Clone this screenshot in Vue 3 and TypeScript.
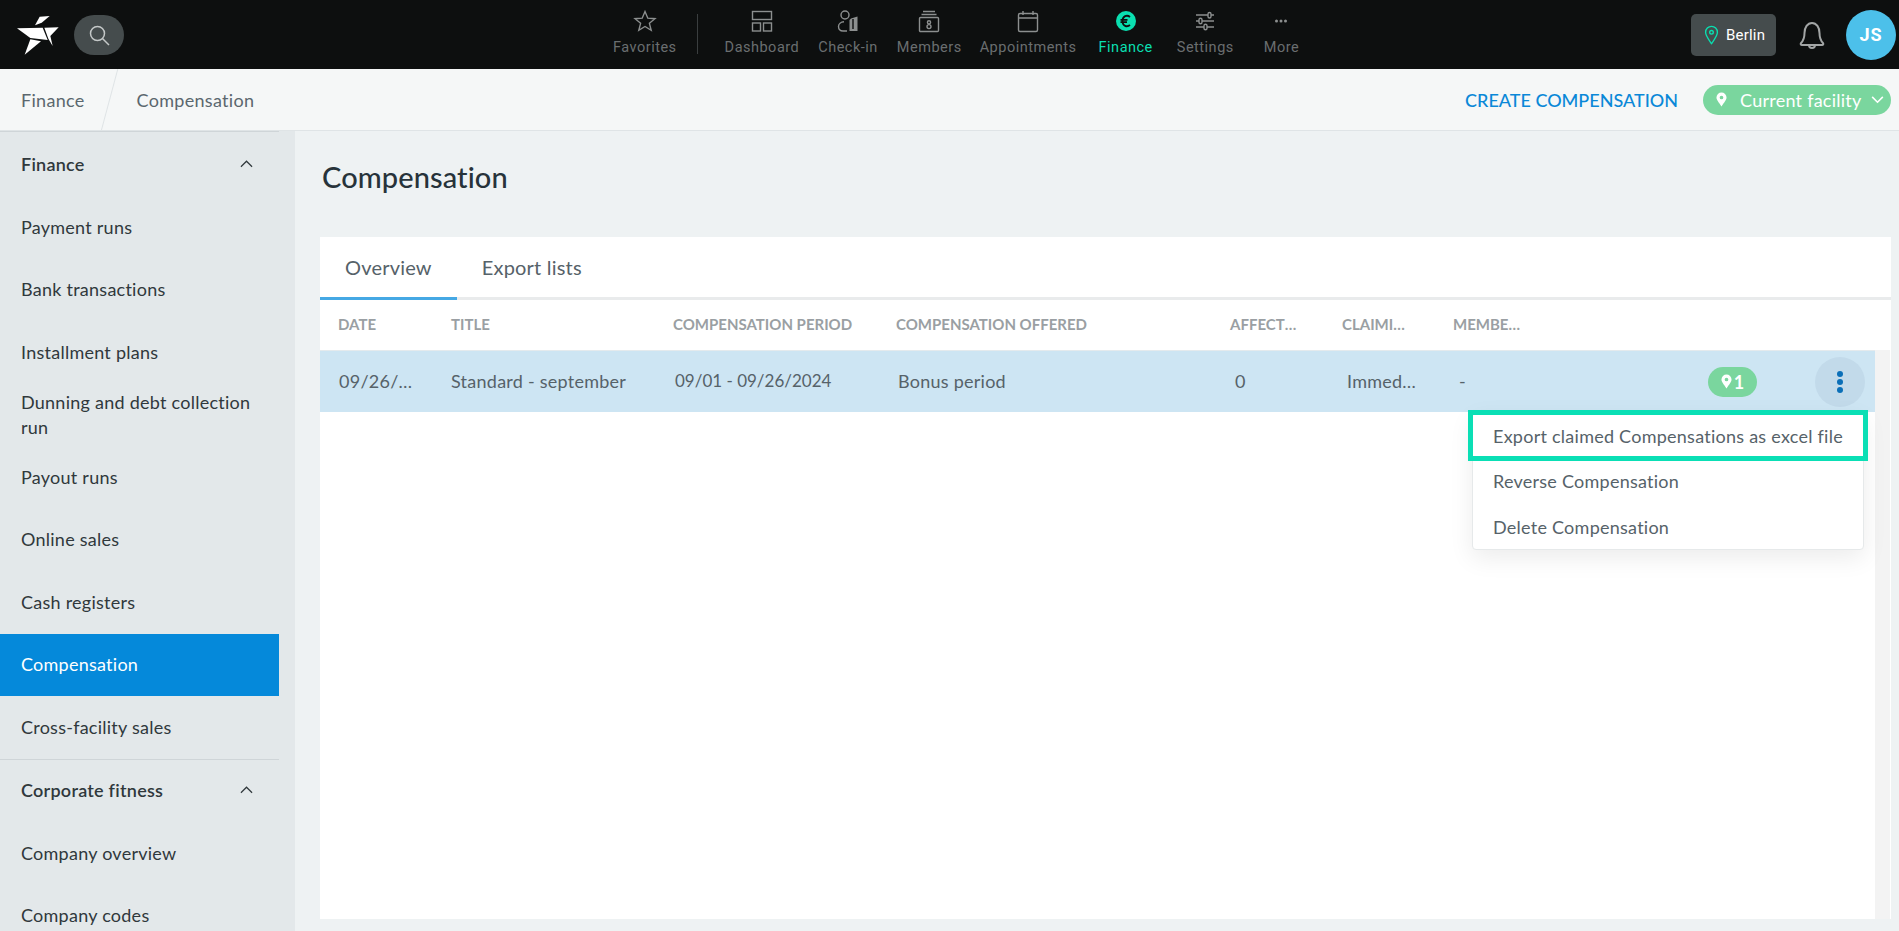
<template>
  <div class="app">
    <header class="topbar">
      <svg class="logo" viewBox="20 15 126 120" width="42" height="40">
        <polygon points="88,20 118,18 94,38 74,46" fill="#fff" />
        <polygon points="20,55 97,53 112,90 60,84" fill="#fff" />
        <polygon points="60,88 92,94 43,134" fill="#fff" />
        <polygon points="102,53 145,52 120,78 127,108 114,86" fill="#fff" />
      </svg>
      <button type="button" class="search-btn">
        <svg viewBox="0 0 24 24" width="24" height="24" fill="none" stroke="#c4c8c8" stroke-width="1.5">
          <circle cx="10.5" cy="10.5" r="7" />
          <path d="M15.5 15.5 L22 22" />
        </svg>
      </button>

      <nav class="main-nav">
        <a v-for="item in navItems" :key="item.label" class="nav-item" :class="{ active: item.label === 'Finance', fav: item.label === 'Favorites' }">
          <svg viewBox="0 0 24 24" width="24" height="24" fill="none" stroke="#8c8f8f" stroke-width="1.4">
            <template v-if="item.label === 'Favorites'">
              <path d="M12 2.5 L14.8 9.2 L22 9.7 L16.4 14.3 L18.2 21.3 L12 17.5 L5.8 21.3 L7.6 14.3 L2 9.7 L9.2 9.2 Z" />
            </template>
            <template v-else-if="item.label === 'Dashboard'">
              <rect x="2.5" y="2.5" width="19" height="8" />
              <rect x="2.5" y="14" width="8" height="8" />
              <rect x="13.5" y="14" width="8" height="8" />
            </template>
            <template v-else-if="item.label === 'Check-in'">
              <circle cx="9" cy="6" r="4" />
              <path d="M11 22 H7 C4 22 2.5 20 2.5 17.5 C2.5 15 5 13 8 12.8" />
              <path d="M15 9.5 L21.5 7.5 V22 H13.5 V11 Z" fill="#8c8f8f" stroke="none" />
              <path d="M17 10 V20" stroke="#0d0f0f" />
            </template>
            <template v-else-if="item.label === 'Members'">
              <rect x="2.5" y="8.5" width="19" height="14" rx="1" />
              <path d="M4.5 5.5 H19.5 M6 2.5 H18" />
              <circle cx="12" cy="13.3" r="1.6" />
              <circle cx="12" cy="17.6" r="2" />
            </template>
            <template v-else-if="item.label === 'Appointments'">
              <rect x="2.5" y="4.5" width="19" height="18" rx="1.5" />
              <path d="M2.5 9 H21.5 M7 2 V6 M17 2 V6" />
            </template>
            <template v-else-if="item.label === 'Finance'">
              <circle cx="12" cy="12" r="10" fill="#0adfb0" stroke="none" />
              <path d="M16 8 C13 5.5 8.5 7 8.5 12 C8.5 17 13 18.500 16 16 M6.500 10.800 H13.500 M6.500 13.200 H13" stroke="#0d0f0f" stroke-width="1.8" />
            </template>
            <template v-else-if="item.label === 'Settings'">
              <path d="M3 6 H21 M3 12 H21 M3 18 H21" />
              <rect x="15" y="3.500" width="3" height="5.500" rx="1.500" fill="#0d0f0f" />
              <rect x="6" y="9.300" width="3" height="5.500" rx="1.500" fill="#0d0f0f" />
              <rect x="11" y="15.300" width="3" height="5.500" rx="1.500" fill="#0d0f0f" />
            </template>
            <template v-else>
              <circle cx="7.500" cy="12" r="1.500" fill="#8c8f8f" stroke="none" />
              <circle cx="12" cy="12" r="1.500" fill="#8c8f8f" stroke="none" />
              <circle cx="16.500" cy="12" r="1.500" fill="#8c8f8f" stroke="none" />
            </template>
          </svg>
          <span>{{ item.label }}</span>
        </a>
      </nav>

      <div class="top-right">
        <div class="location">
          <svg viewBox="0 0 16 22" width="15" height="20" fill="none" stroke="#0adfb0" stroke-width="1.5">
            <path d="M8 20.500 C4.500 15.500 1.500 11.800 1.500 8 A6.500 6.500 0 0 1 14.500 8 C14.500 11.800 11.500 15.500 8 20.500 Z" />
            <circle cx="8" cy="8" r="2" />
          </svg>
          <span>Berlin</span>
        </div>
        <svg class="bell" viewBox="0 0 26 30" width="26" height="30" fill="none" stroke="#a2a5a5" stroke-width="2">
          <path d="M2 23 C5 20 5.500 17 5.500 13 C5.500 7.500 8.500 3 13 3 C17.500 3 20.500 7.500 20.500 13 C20.500 17 21 20 24 23 C24.800 24 24 25 23 25 H3 C2 25 1.200 24 2 23 Z" />
          <path d="M10 25 A3 3 0 0 0 16 25" />
        </svg>
        <div class="avatar">JS</div>
      </div>
    </header>

    <div class="subbar">
      <div class="crumbs">
        <span class="crumb">Finance</span>
        <span class="crumb-sep"></span>
        <span class="crumb">Compensation</span>
      </div>
      <div class="sub-actions">
        <a class="create-link">CREATE COMPENSATION</a>
        <div class="facility">
          <svg viewBox="0 0 12 16" width="11" height="15" fill="#fff">
            <path fill-rule="evenodd" d="M6 15.500 C3 11 .500 8.500 .500 5.800 A5.500 5.500 0 0 1 11.500 5.800 C11.500 8.500 9 11 6 15.500 Z M6 3.800 A2 2 0 1 0 6 7.800 A2 2 0 0 0 6 3.800 Z" />
          </svg>
          <span>Current facility</span>
          <svg viewBox="0 0 14 9" width="13" height="8" fill="none" stroke="#fff" stroke-width="1.800">
            <path d="M1 1 L7 7 L13 1" />
          </svg>
        </div>
      </div>
    </div>

    <div class="body">
      <aside class="sidebar">
        <div class="side-rule"></div>
        <template v-for="group in sideGroups" :key="group.title">
          <div class="side-head">
            <span>{{ group.title }}</span>
            <svg viewBox="0 0 14 8" width="13" height="8" fill="none" stroke="#30383c" stroke-width="1.300">
              <path d="M1 7 L7 1 L13 7" />
            </svg>
          </div>
          <a
            v-for="link in group.links"
            :key="link"
            class="side-link"
            :class="{ current: link === 'Compensation' }"
          >{{ link }}</a>
          <div v-if="group.title === 'Finance'" class="side-rule"></div>
        </template>
      </aside>

      <main class="content">
        <h1>Compensation</h1>
        <section class="card">
          <div class="tabs">
            <span class="tab selected">Overview</span>
            <span class="tab">Export lists</span>
          </div>
          <div class="grid head">
            <span v-for="col in columns" :key="col">{{ col }}</span>
          </div>
          <div class="table-body">
            <div class="list">
              <div class="grid row">
                <span class="cell">09/26/2024</span>
                <span class="cell">Standard - september</span>
                <span class="cell">09/01 - 09/26/2024</span>
                <span class="cell">Bonus period</span>
                <span class="cell">0</span>
                <span class="cell">Immediately</span>
                <span class="cell">-</span>
                <span class="row-tail">
                  <span class="pin-badge">
                    <svg viewBox="0 0 12 16" width="11" height="15" fill="#fff">
                      <path fill-rule="evenodd" d="M6 15.500 C3 11 .500 8.500 .500 5.800 A5.500 5.500 0 0 1 11.500 5.800 C11.500 8.500 9 11 6 15.500 Z M6 3.800 A2 2 0 1 0 6 7.800 A2 2 0 0 0 6 3.800 Z" />
                    </svg>
                    1
                  </span>
                  <span class="kebab"><i></i><i></i><i></i></span>
                </span>
              </div>
              <div class="menu">
                <a v-for="entry in menuEntries" :key="entry">{{ entry }}</a>
                <div class="mark"></div>
              </div>
            </div>
            <div class="track"></div>
          </div>
        </section>
      </main>
    </div>
  </div>
</template>

<script setup lang="ts">
const navItems = [
  { label: 'Favorites' },
  { label: 'Dashboard' },
  { label: 'Check-in' },
  { label: 'Members' },
  { label: 'Appointments' },
  { label: 'Finance' },
  { label: 'Settings' },
  { label: 'More' }
];

const sideGroups = [
  {
    title: 'Finance',
    links: [
      'Payment runs',
      'Bank transactions',
      'Installment plans',
      'Dunning and debt collection run',
      'Payout runs',
      'Online sales',
      'Cash registers',
      'Compensation',
      'Cross-facility sales'
    ]
  },
  { title: 'Corporate fitness', links: ['Company overview', 'Company codes'] }
];

const columns = ['Date', 'Title', 'Compensation period', 'Compensation offered', 'Affected members', 'Claiming type', 'Member group'];

const menuEntries = ['Export claimed Compensations as excel file', 'Reverse Compensation', 'Delete Compensation'];
</script>

<style>
html,
body {
  margin: 0;
  height: 100%;
  overflow: hidden;
}
</style>

<style scoped>
.app {
  height: 931px;
  display: flex;
  flex-direction: column;
  overflow: hidden;
  font-family: Lato, 'Noto Sans', sans-serif;
  color: #566269;
}

.topbar {
  height: 69px;
  flex: none;
  display: flex;
  align-items: center;
  background: #0d0f0f;
  padding-left: 17px;
  box-sizing: border-box;
}

.logo {
  flex: none;
}

.search-btn {
  width: 50px;
  height: 40px;
  margin-left: 15px;
  border: 0;
  padding: 0;
  border-radius: 20px;
  background: #454c4d;
  display: flex;
  align-items: center;
  justify-content: center;
}

.main-nav {
  display: flex;
  margin-left: 480px;
}

.nav-item {
  display: flex;
  flex-direction: column;
  align-items: center;
  height: 69px;
  box-sizing: border-box;
  padding: 9px 9px 0;
  gap: 5px;
  font: 14.5px/20px Roboto, sans-serif;
  letter-spacing: 0.5px;
  color: #6a6e6f;
}

.nav-item:nth-child(3),
.nav-item:nth-child(4) {
  margin-left: 1px;
}

.nav-item:nth-child(6) {
  margin-left: 4px;
}

.nav-item:nth-child(7) {
  margin-left: 6px;
}

.nav-item:nth-child(8) {
  margin-left: 12px;
}

.nav-item.fav {
  margin-right: 30px;
  position: relative;
}

.nav-item.fav::after {
  content: '';
  position: absolute;
  right: -12px;
  top: 14px;
  height: 40px;
  width: 1px;
  background: #3a3e3f;
}

.nav-item.active {
  color: #0adfb0;
}

.top-right {
  margin-left: auto;
  display: flex;
  align-items: center;
  padding-right: 3px;
}

.location {
  width: 85px;
  height: 42px;
  box-sizing: border-box;
  border-radius: 5px;
  background: #454c4d;
  display: flex;
  align-items: center;
  gap: 7px;
  padding-left: 13px;
  font: 400 15px Roboto, sans-serif;
  letter-spacing: 0.2px;
  color: #fff;
}

.bell {
  margin-left: 23px;
}

.avatar {
  margin-left: 21px;
  width: 50px;
  height: 50px;
  border-radius: 50%;
  background: #4cc0ea;
  color: #fff;
  font: 700 18px/50px Roboto, sans-serif;
  letter-spacing: 1px;
  text-align: center;
}

.subbar {
  height: 62px;
  flex: none;
  display: flex;
  align-items: center;
  justify-content: space-between;
  box-sizing: border-box;
  background: #f5f7f7;
  border-bottom: 1px solid #dfe4e6;
  padding: 0 8px 0 21px;
}

.crumbs {
  display: flex;
  align-items: center;
  height: 100%;
  font-size: 18px;
  letter-spacing: 0.3px;
  color: #5b676e;
}

.crumb-sep {
  width: 1px;
  height: 64px;
  margin: 0 27px 0 24px;
  background: #dfe4e6;
  transform: rotate(15deg);
}

.sub-actions {
  display: flex;
  align-items: center;
}

.create-link {
  font-size: 18px;
  font-weight: 500;
  color: #0a88d8;
}

.facility {
  margin-left: 25px;
  width: 188px;
  height: 30px;
  box-sizing: border-box;
  border-radius: 15px;
  background: #7ad69e;
  color: #fff;
  font-size: 18px;
  letter-spacing: 0.25px;
  display: flex;
  align-items: center;
  gap: 13px;
  padding-left: 13px;
}

.facility svg:last-child {
  margin-left: -4px;
}

.body {
  flex: 1;
  min-height: 0;
  display: flex;
}

.sidebar {
  width: 295px;
  flex: none;
  box-sizing: border-box;
  padding: 0 16px 0 0;
  background: #e3e8ea;
  color: #30383c;
  font-size: 18px;
  letter-spacing: 0.25px;
}

.sidebar > .side-rule:first-child {
  margin-bottom: 1.500px;
}

.side-head {
  height: 62.500px;
  display: flex;
  align-items: center;
  justify-content: space-between;
  padding: 0 26px 1px 21px;
  box-sizing: border-box;
  font-weight: 600;
}

.side-link {
  display: flex;
  align-items: center;
  height: 62.500px;
  padding: 0 21px;
  box-sizing: border-box;
  line-height: 25px;
}

.side-link.current {
  background: #0589da;
  color: #fff;
}

.side-rule {
  height: 1px;
  background: #cfd5d8;
}

.content {
  flex: 1;
  min-width: 0;
  display: flex;
  flex-direction: column;
  background: #eef2f3;
  padding: 0 8px 12px 25px;
}

h1 {
  margin: 0;
  height: 106px;
  display: flex;
  align-items: center;
  padding: 0 0 16px 2px;
  box-sizing: border-box;
  font-size: 29px;
  letter-spacing: 0.1px;
  font-weight: 500;
  color: #27333a;
}

.card {
  flex: 1;
  display: flex;
  flex-direction: column;
  background: #fff;
  min-height: 0;
}

.tabs {
  height: 63px;
  flex: none;
  display: flex;
  box-sizing: border-box;
  border-bottom: 3px solid #e9ebec;
  font-size: 20px;
  letter-spacing: 0.2px;
}

.tab {
  display: flex;
  align-items: center;
  padding: 0 25px;
  height: 63px;
  box-sizing: border-box;
  border-bottom: 3px solid transparent;
}

.tab.selected {
  border-bottom-color: #45a8e4;
}

.grid {
  display: grid;
  grid-template-columns: 113px 222px 223px 334px 112px 111px 112px 1fr;
  align-items: center;
}

.head {
  height: 50px;
  flex: none;
  padding-right: 16px;
  padding-bottom: 3px;
  box-sizing: border-box;
  font-size: 15px;
  font-weight: 700;
  color: #9a9fa3;
  text-transform: uppercase;
}

.head span {
  padding: 0 22px 0 18px;
  overflow: hidden;
  text-overflow: ellipsis;
  white-space: nowrap;
}

.table-body {
  flex: 1;
  min-height: 0;
  display: flex;
  padding-right: 1px;
}

.list {
  flex: 1;
  min-width: 0;
  position: relative;
}

.track {
  width: 15px;
  flex: none;
  background: #f3f3f3;
}

.row {
  height: 62px;
  background: #cde5f3;
  border-top: 1px solid #e4eaed;
  box-sizing: border-box;
  font-size: 18px;
  letter-spacing: 0.25px;
}

.cell {
  padding: 0 18px 2px 19px;
  overflow: hidden;
  text-overflow: ellipsis;
  white-space: nowrap;
}

.cell:nth-child(2) {
  padding-left: 18px;
}

.cell:nth-child(3) {
  font-size: 17px;
  letter-spacing: 0;
  padding-left: 20px;
}

.cell:nth-child(4) {
  padding-left: 20px;
}

.cell:nth-child(5) {
  padding-left: 23px;
}

.cell:nth-child(6) {
  padding-left: 23px;
  padding-right: 15px;
}

.cell:nth-child(7) {
  padding-left: 24px;
}

.row-tail {
  display: flex;
  align-items: center;
  justify-content: flex-end;
  padding-right: 10px;
}

.pin-badge {
  width: 49px;
  height: 30px;
  border-radius: 15px;
  background: #7ad69e;
  color: #fff;
  font-weight: 700;
  font-size: 18px;
  display: flex;
  align-items: center;
  justify-content: center;
  gap: 2px;
}

.kebab {
  margin-left: 58px;
  width: 50px;
  height: 50px;
  border-radius: 50%;
  background: #c2daea;
  display: flex;
  flex-direction: column;
  align-items: center;
  justify-content: center;
  gap: 2px;
}

.kebab i {
  width: 6px;
  height: 6px;
  border-radius: 50%;
  background: #0a6fb8;
}

.menu {
  position: absolute;
  top: 62px;
  right: 11px;
  width: 392px;
  height: 138px;
  box-sizing: border-box;
  background: #fff;
  border: 1px solid #e6e9ea;
  border-radius: 4px;
  box-shadow: 0 8px 24px rgba(0, 0, 0, 0.08);
  font-size: 18px;
  letter-spacing: 0.25px;
}

.menu a {
  display: flex;
  align-items: center;
  height: 45.500px;
  padding-left: 20px;
}

.mark {
  position: absolute;
  left: -5px;
  right: -5px;
  top: -3px;
  height: 51px;
  box-sizing: border-box;
  border: 5px solid #0adfb5;
}
</style>
